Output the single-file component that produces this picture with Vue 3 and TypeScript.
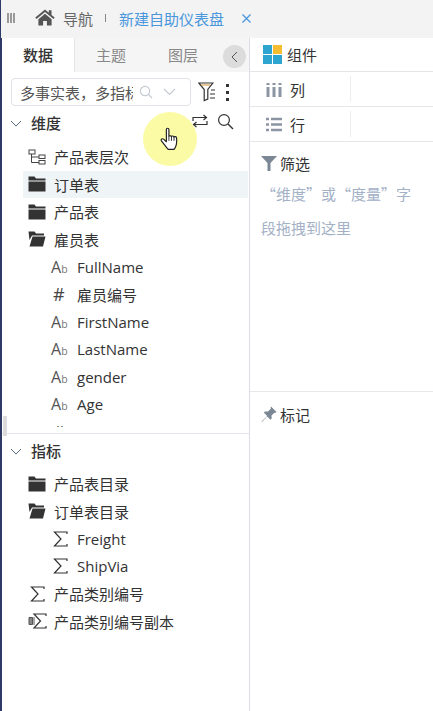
<script setup lang="ts">
type RowIcon = 'hier' | 'folder' | 'open' | 'text' | 'num' | 'sum' | 'sumcopy'

interface TreeRow {
  label: string
  icon: RowIcon
  child?: boolean
  active?: boolean
}

const dimensions: TreeRow[] = [
  { label: '产品表层次', icon: 'hier' },
  { label: '订单表', icon: 'folder', active: true },
  { label: '产品表', icon: 'folder' },
  { label: '雇员表', icon: 'open' },
  { label: 'FullName', icon: 'text', child: true },
  { label: '雇员编号', icon: 'num', child: true },
  { label: 'FirstName', icon: 'text', child: true },
  { label: 'LastName', icon: 'text', child: true },
  { label: 'gender', icon: 'text', child: true },
  { label: 'Age', icon: 'text', child: true },
  { label: 'Address', icon: 'num', child: true },
]

const measures: TreeRow[] = [
  { label: '产品表目录', icon: 'folder' },
  { label: '订单表目录', icon: 'open' },
  { label: 'Freight', icon: 'sum', child: true },
  { label: 'ShipVia', icon: 'sum', child: true },
  { label: '产品类别编号', icon: 'sum' },
  { label: '产品类别编号副本', icon: 'sumcopy' },
]

const groups = [
  { title: '维度', rows: dimensions, listClass: 'tree-list--clip' },
  { title: '指标', rows: measures, listClass: '' },
]
</script>

<template>
  <div class="page">
    <header class="topbar">
      <span class="grip"><i></i><i></i><i></i></span>
      <svg class="home" width="20" height="17" viewBox="0 0 20 17">
        <path d="M10 0.500 0.300 8.600l1.200 1.300L10 2.900l8.500 7 1.200-1.300L16.500 6V1.200h-2.700v2.600z" fill="#555" />
        <path d="M3.400 10.200 10 4.700l6.600 5.500v6.300h-4.700v-4.400H8.100v4.400H3.400z" fill="#555" />
      </svg>
      <span class="nav-label">导航</span>
      <span class="nav-sep"></span>
      <span class="nav-tab">新建自助仪表盘</span>
      <svg class="nav-close" width="9" height="9" viewBox="0 0 9 9">
        <path d="M.5.500l8 8M8.500.500l-8 8" stroke="#4a97dd" stroke-width="1.300" fill="none" />
      </svg>
    </header>

    <main class="body">
      <aside class="left">
        <div class="tabs">
          <span class="tab tab--active">数据</span>
          <span class="tab">主题</span>
          <span class="tab">图层</span>
          <span class="collapse">
            <svg width="7" height="12" viewBox="0 0 7 12">
              <path d="M6 1 1 6l5 5" stroke="#555" stroke-width="1" fill="none" />
            </svg>
          </span>
        </div>

        <div class="source-row">
          <div class="select">
            <span class="select-text">多事实表，多指标</span>
            <svg class="select-search" width="14" height="14" viewBox="0 0 14 14">
              <circle cx="6" cy="6" r="4.600" stroke="#c5cbd3" stroke-width="1.200" fill="none" />
              <path d="M9.400 9.400 13 13" stroke="#c5cbd3" stroke-width="1.300" />
            </svg>
            <svg class="select-arrow" width="13" height="8" viewBox="0 0 13 8">
              <path d="M1 1l5.500 5.500L12 1" stroke="#c5cbd3" stroke-width="1.200" fill="none" />
            </svg>
          </div>
          <svg class="filter-list" width="18" height="20" viewBox="0 0 18 20">
            <path d="M0.800 1h14l-5 6.500V17l-3.600 1.500V7.500z" stroke="#333" stroke-width="1.200" fill="none" />
            <path d="M3 3h9" stroke="#d9902f" stroke-width="1" />
            <path d="M13 8h4M12 12h5M12 16h5" stroke="#333" stroke-width="1.200" />
          </svg>
          <span class="more"><i></i><i></i><i></i></span>
        </div>

        <section v-for="(group, g) in groups" :key="group.title" class="group" :class="{ 'group--first': g === 0 }">
          <div class="group-head">
            <svg width="12" height="7" viewBox="0 0 12 7">
              <path d="M1 1l5 5 5-5" stroke="#5a6a80" stroke-width="1" fill="none" />
            </svg>
            <span class="group-title">{{ group.title }}</span>
            <span v-if="g === 0" class="group-tools">
              <svg width="16" height="14" viewBox="0 0 16 14">
                <path d="M1 7V3.500h13M11.500 1 14.500 3.500 11.500 6" stroke="#333" stroke-width="1.200" fill="none" />
                <path d="M15 7v3.500H2M4.500 8 1.500 10.500 4.500 13" stroke="#333" stroke-width="1.200" fill="none" />
              </svg>
              <svg width="17" height="17" viewBox="0 0 17 17">
                <circle cx="7" cy="7" r="5.400" stroke="#333" stroke-width="1.200" fill="none" />
                <path d="M11 11l5 5" stroke="#333" stroke-width="1.400" />
              </svg>
            </span>
          </div>

          <div class="tree-list" :class="group.listClass">
            <div
              v-for="row in group.rows"
              :key="row.label"
              class="tree-row"
              :class="{ 'tree-row--child': row.child, 'tree-row--active': row.active }"
            >
              <span class="row-icon">
                <svg v-if="row.icon === 'hier'" width="18" height="16" viewBox="0 0 18 16">
                  <rect x="1" y="1" width="6" height="4" stroke="#444" fill="none" />
                  <rect x="11" y="6" width="6" height="3.500" stroke="#444" fill="none" />
                  <rect x="11" y="11.500" width="6" height="3.500" stroke="#444" fill="none" />
                  <path d="M3.500 5v8.500H11M3.500 8H11" stroke="#444" fill="none" />
                </svg>
                <svg v-else-if="row.icon === 'folder'" width="18" height="16" viewBox="0 0 18 16">
                  <path d="M0.500 0.500h6l1.500 2h9.500v2H0.500z" fill="#333" />
                  <path d="M0.500 5.500h17v10H0.500z" fill="#333" />
                </svg>
                <svg v-else-if="row.icon === 'open'" width="18" height="16" viewBox="0 0 18 16">
                  <path d="M0.500 0.500h6l1.500 2h8v2H4L1.500 9z" fill="#333" />
                  <path d="M4.500 5.500h13L15 15.500H1.500z" fill="#333" />
                </svg>
                <span v-else-if="row.icon === 'text'" class="ab">A<small>b</small></span>
                <span v-else-if="row.icon === 'num'" class="hash">#</span>
                <svg v-else-if="row.icon === 'sum'" class="sum" width="15" height="16" viewBox="0 0 15 16">
                  <path d="M14 3V1H1.500L8 8l-6.500 7H14v-2" stroke="#333" stroke-width="1.200" fill="none" />
                </svg>
                <svg v-else width="19" height="16" viewBox="0 0 19 16">
                  <path d="M1 4.500h3.500v7H1z" stroke="#555" fill="#888" />
                  <path d="M6 4v8" stroke="#555" />
                  <path d="M18 3V1H6l6.500 7L6 15h12v-2" stroke="#333" stroke-width="1.200" fill="none" />
                </svg>
              </span>
              <span class="row-label">{{ row.label }}</span>
            </div>
          </div>
        </section>
      </aside>

      <section class="right">
        <div class="panel-head">
          <span class="tiles">
            <i class="tile"></i><i class="tile tile--gold"></i><i class="tile"></i><i class="tile"></i>
          </span>
          <span>组件</span>
        </div>

        <div class="shelf">
          <span class="shelf-name">
            <svg width="16" height="15" viewBox="0 0 16 15">
              <path d="M2 1v2M8 1v2M14 1v2M2 5v10M8 5v10M14 5v10" stroke="#8b95a3" stroke-width="3" />
            </svg>
            列
          </span>
        </div>
        <div class="shelf">
          <span class="shelf-name">
            <svg width="16" height="15" viewBox="0 0 16 15">
              <path d="M0 2h3M5 2h11M0 7.500h3M5 7.500h11M0 13h3M5 13h11" stroke="#8b95a3" stroke-width="2.400" />
            </svg>
            行
          </span>
        </div>

        <div class="filters">
          <div class="side-title">
            <svg width="16" height="15" viewBox="0 0 16 15">
              <path d="M0 0h16L9.500 7v8h-3V7z" fill="#7c8795" />
            </svg>
            <span>筛选</span>
          </div>
          <p class="hint">“维度”或“度量”字段拖拽到这里</p>
        </div>

        <div class="marks">
          <div class="side-title">
            <svg width="16" height="17" viewBox="0 0 16 17">
              <path d="M10 0.500 15.500 6l-1.200 1-1-.2-2.800 2.800.2 3-1.200 1.200-3.400-3.400L1 16 .6 15.600 6.200 10 2.800 6.600 4 5.400l3 .2L9.800 2.800 9.600 1.800z" fill="#7c8795" />
            </svg>
            <span>标记</span>
          </div>
        </div>
      </section>
    </main>

    <div class="scroll-thumb"></div>
    <div class="cursor-glow">
      <svg width="20" height="24" viewBox="0 0 22 26">
        <path
          d="M7 2.500c0-1.800 2.800-1.800 2.800 0V10c0-.6 2.600-1 2.800.4 .2-1 2.600-1 2.800.5 .3-.8 2.600-.8 2.800 1 .3 3 .2 6.500-.8 9-.8 2-1.500 3.100-2.300 3.600H9c-1.200-1.300-2.500-3-4-5L1.600 15c-1-1.500 1-3 2.300-1.800L7 16z"
          fill="#fff"
          stroke="#222"
          stroke-width="1.300"
          stroke-linejoin="round"
        />
        <path d="M9.800 10v5M12.600 10.500V15M15.400 11v4" stroke="#222" stroke-width="1" />
      </svg>
    </div>
  </div>
</template>

<style scoped>
.page {
  position: relative;
  width: 433px;
  height: 711px;
  overflow: hidden;
  display: flex;
  flex-direction: column;
  background: #fff;
  color: #333;
  font-family: 'Open Sans', 'Noto Sans CJK SC', sans-serif;
  font-size: 15px;
}

.topbar {
  height: 38px;
  flex-shrink: 0;
  display: flex;
  align-items: center;
  background: #f3f3f3;
  border-left: 1px solid #2f3b66;
  box-sizing: border-box;
  padding: 0 0 2px 6px;
}

.grip {
  display: flex;
  gap: 1px;
  margin-right: 20px;
}

.grip i {
  width: 2px;
  height: 10px;
  background: #999;
}

.home {
  margin: -2px 8px 0 0;
}

.nav-label {
  color: #666;
}

.nav-sep {
  width: 1px;
  height: 8px;
  background: #888;
  margin: 0 13px 0 12px;
}

.nav-tab {
  color: #4a97dd;
}

.nav-close {
  margin-left: 18px;
}

.body {
  flex: 1;
  display: flex;
  min-height: 0;
}

.left {
  width: 250px;
  flex-shrink: 0;
  box-sizing: border-box;
  border-left: 2px solid #2f3b66;
  border-right: 1px solid #dcdde3;
}

.tabs {
  position: relative;
  height: 34px;
  display: flex;
  background: #f5f5f5;
}

.tab {
  width: 72px;
  line-height: 34px;
  text-align: center;
  color: #888;
}

.tab--active {
  width: 73px;
  box-sizing: border-box;
  background: #fff;
  color: #333;
  font-weight: 500;
  border-right: 1px solid #e6e6e6;
}

.collapse {
  position: absolute;
  right: 3px;
  top: 7px;
  width: 23px;
  height: 23px;
  border-radius: 50%;
  background: #dcdcdc;
  display: flex;
  align-items: center;
  justify-content: center;
}

.source-row {
  display: flex;
  align-items: center;
  padding: 6px 0 0 9px;
}

.select {
  width: 180px;
  height: 28px;
  box-sizing: border-box;
  border: 1px solid #dfe3e8;
  border-radius: 4px;
  display: flex;
  align-items: center;
  padding-left: 8px;
}

.select-text {
  width: 113px;
  flex-shrink: 0;
  overflow: hidden;
  white-space: nowrap;
  color: #555;
}

.select-search {
  margin-left: 6px;
}

.select-arrow {
  margin-left: 10px;
}

.filter-list {
  margin-left: 7px;
}

.more {
  display: flex;
  flex-direction: column;
  gap: 4px;
  margin-left: 10px;
}

.more i {
  width: 3px;
  height: 3px;
  background: #333;
}

.group--first {
  padding-top: 5px;
  border-bottom: 1px solid #e6e6ee;
  padding-bottom: 6px;
}

.group-head {
  height: 24px;
  display: flex;
  align-items: center;
  padding-left: 8px;
}

.group-title {
  margin: -2px 0 0 9px;
  font-weight: 500;
}

.group-tools {
  display: flex;
  align-items: center;
  gap: 9px;
  margin-left: auto;
  margin-right: 15px;
  margin-top: -4px;
}

.group:not(.group--first) {
  padding-top: 5px;
}

.group:not(.group--first) .tree-list {
  margin-top: 7px;
}

.tree-list {
  margin-top: 8px;
}

.tree-list--clip {
  height: 284px;
  overflow: hidden;
}

.tree-row {
  height: 27.500px;
  display: flex;
  align-items: center;
  padding-left: 26px;
  white-space: nowrap;
}

.tree-row--child {
  padding-left: 49px;
}

.tree-row--active {
  margin-left: 21px;
  margin-right: 1px;
  padding-left: 5px;
  background: #eff4f7;
}

.row-icon {
  width: 26px;
  flex-shrink: 0;
  display: flex;
  align-items: center;
}

.ab {
  font-size: 16px;
  color: #555;
  line-height: 1;
}

.ab small {
  font-size: 10.500px;
  color: #777;
}

.hash {
  font-size: 18px;
  font-weight: 500;
  color: #444;
  line-height: 1;
  padding-left: 2px;
}

.sum {
  margin-left: 2px;
}

.row-label {
  color: #333;
}

.right {
  flex: 1;
  min-width: 0;
  display: flex;
  flex-direction: column;
}

.panel-head {
  height: 33px;
  flex-shrink: 0;
  display: flex;
  align-items: center;
  gap: 5px;
  padding-left: 13px;
  border-bottom: 1px solid #e6e6e6;
}

.tiles {
  display: grid;
  grid-template-columns: 9px 9px;
  grid-auto-rows: 9px;
  gap: 1px;
}

.tile {
  background: #2ea4d0;
}

.tile--gold {
  background: #f6bd31;
}

.shelf {
  height: 34px;
  flex-shrink: 0;
  display: flex;
  align-items: center;
  border-bottom: 1px solid #e6e6e6;
  padding-left: 16px;
}

.shelf-name {
  width: 84px;
  height: 26px;
  display: flex;
  align-items: center;
  gap: 8px;
  border-right: 1px solid #eeeeee;
}

.filters {
  height: 250px;
  flex-shrink: 0;
  box-sizing: border-box;
  padding: 11px 11px 0;
  border-bottom: 1px solid #e8e8e8;
}

.side-title {
  display: flex;
  align-items: center;
  gap: 3px;
  height: 20px;
}

.hint {
  margin: 4px 0 0;
  color: #a3b1c6;
  font-family: 'Noto Sans CJK SC', sans-serif;
  line-height: 34px;
}

.marks {
  padding: 12px 11px 0;
}

.scroll-thumb {
  position: absolute;
  left: 3px;
  top: 416px;
  width: 4px;
  height: 20px;
  background: #dcdcdc;
}

.cursor-glow {
  position: absolute;
  left: 143px;
  top: 112px;
  width: 54px;
  height: 54px;
  border-radius: 50%;
  background: #fbfba6;
  display: flex;
  align-items: center;
  justify-content: center;
}
</style>
